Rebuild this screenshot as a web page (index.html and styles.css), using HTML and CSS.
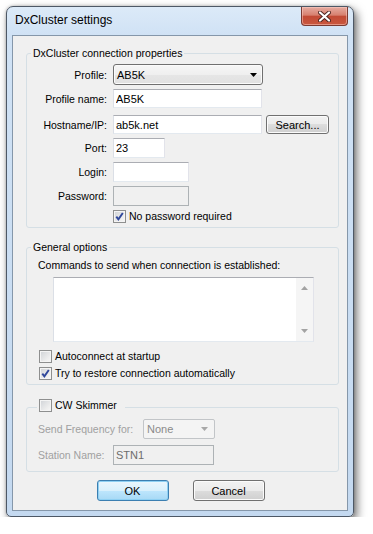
FILE: index.html
```html
<!DOCTYPE html>
<html lang="en">
<head>
  <meta charset="UTF-8" />
  <title>DxCluster settings</title>
  <link rel="stylesheet" href="styles.css">
</head>
<body>
  <div class="window">
    <div class="titlebar">
      <span class="title">DxCluster settings</span>
      <span class="close-btn">
        <svg width="13" height="11" viewBox="0 0 13 11">
          <path d="M2 1.5 L11 9.5 M11 1.5 L2 9.5" stroke="#4b2420" stroke-width="4" stroke-linecap="round"/>
          <path d="M2 1.5 L11 9.5 M11 1.5 L2 9.5" stroke="#fff" stroke-width="2.2" stroke-linecap="round"/>
        </svg>
      </span>
    </div>

    <div class="client">
      <fieldset class="group">
        <legend>DxCluster connection properties</legend>
        <div class="props">
          <div class="row">
            <span class="lbl">Profile:</span>
            <div class="combo combo-profile">
              <span>AB5K</span>
              <svg width="7" height="4" viewBox="0 0 7 4"><path d="M0 0 H7 L3.5 4 Z" fill="#000"/></svg>
            </div>
          </div>
          <div class="row">
            <span class="lbl">Profile name:</span>
            <input class="text w-wide h19" value="AB5K">
          </div>
          <div class="row row-host">
            <span class="lbl">Hostname/IP:</span>
            <input class="text w-wide h19" value="ab5k.net">
            <button class="btn btn-search">Search...</button>
          </div>
          <div class="row">
            <span class="lbl">Port:</span>
            <input class="text w-port" value="23">
          </div>
          <div class="row">
            <span class="lbl">Login:</span>
            <input class="text w-login" value="">
          </div>
          <div class="row">
            <span class="lbl">Password:</span>
            <input class="text w-login" disabled>
          </div>
          <div class="row">
            <span class="lbl"></span>
            <span class="opt">
              <span class="check">
                <svg width="11" height="11" viewBox="0 0 11 11"><path d="M2.3 5.6 L4.4 8.4 L8.8 2" fill="none" stroke="#2f479b" stroke-width="1.9"/></svg>
              </span>
              No password required
            </span>
          </div>
        </div>
      </fieldset>

      <fieldset class="group group-general">
        <legend>General options</legend>
        <div class="general">
          <div class="cmd-label">Commands to send when connection is established:</div>
          <div class="memo">
            <div class="scroll">
              <svg width="7" height="4" viewBox="0 0 7 4"><path d="M0 4 H7 L3.5 0 Z" fill="#a3a3a3"/></svg>
              <svg width="7" height="4" viewBox="0 0 7 4"><path d="M0 0 H7 L3.5 4 Z" fill="#a3a3a3"/></svg>
            </div>
          </div>
          <div class="opt opt-row">
            <span class="check"></span>
            Autoconnect at startup
          </div>
          <div class="opt opt-row opt-next">
            <span class="check">
              <svg width="11" height="11" viewBox="0 0 11 11"><path d="M2.3 5.6 L4.4 8.4 L8.8 2" fill="none" stroke="#2f479b" stroke-width="1.9"/></svg>
            </span>
            Try to restore connection automatically
          </div>
        </div>
      </fieldset>

      <fieldset class="group group-skimmer">
        <legend>
          <span class="opt">
            <span class="check"></span>
            CW Skimmer
          </span>
        </legend>
        <div class="skimmer">
          <div class="srow">
            <span class="dim-lbl lbl-freq">Send Frequency for:</span>
            <div class="combo combo-off">
              <span>None</span>
              <svg width="7" height="4" viewBox="0 0 7 4"><path d="M0 0 H7 L3.5 4 Z" fill="#a8a8a8"/></svg>
            </div>
          </div>
          <div class="srow srow-next">
            <span class="dim-lbl lbl-station">Station Name:</span>
            <input class="text w-station" value="STN1" disabled>
          </div>
        </div>
      </fieldset>

      <div class="actions">
        <button class="btn btn-default">OK</button>
        <button class="btn">Cancel</button>
      </div>
    </div>
  </div>
</body>
</html>
```

FILE: styles.css
```css
* {
  box-sizing: border-box;
}
body {
  margin: 0;
  background: #fff;
  font-family: "Liberation Sans", Arial, sans-serif;
  font-size: 10.5px;
  color: #000;
}
.window {
  margin: 6px 0 0 6px;
  width: 348px;
  border: 1px solid #4d5866;
  border-radius: 7px 7px 5px 5px;
  padding: 0 5px 5px;
  background: linear-gradient(to bottom, #dceaf8 0, #d0e2f5 28px, #c4d9f0 100%);
  box-shadow: 3px 4px 10px rgba(0, 0, 0, 0.55), 0 0 3px rgba(0, 0, 0, 0.25);
}
.titlebar {
  height: 28px;
  display: flex;
  align-items: flex-start;
}
.title {
  margin: 5px 0 0 3px;
  font-size: 12px;
  line-height: 16px;
  color: #000;
}
.close-btn {
  margin-left: auto;
  width: 47px;
  height: 19px;
  display: flex;
  align-items: center;
  justify-content: center;
  border: 1px solid #7a3a32;
  border-top: none;
  border-radius: 0 0 4px 4px;
  background: linear-gradient(to bottom, #e6aca1 0%, #d7806f 45%, #c24a35 52%, #c9583f 100%);
  box-shadow: inset 0 0 0 1px rgba(255, 210, 200, 0.5);
}
.client {
  background: #f0f0f0;
  border: 1px solid #8597aa;
  padding: 11px 8px 9px 13px;
}
.group {
  margin: 0;
  padding: 0;
  min-width: 0;
  border: 1px solid #d5dfe5;
  border-radius: 3px;
}
.group legend {
  margin-left: 4px;
  padding: 0 2px;
  line-height: 13px;
}
.group-general {
  margin-top: 13px;
}
.group-skimmer {
  margin-top: 14px;
}
.group-skimmer legend {
  margin-left: 10px;
  padding: 0 8px 0 2px;
}

/* connection properties */
.props {
  display: flex;
  flex-direction: column;
  gap: 4px;
  padding: 4px 0 4px;
}
.row {
  display: flex;
  align-items: center;
}
.row-host {
  margin-top: 3px;
}
.lbl {
  width: 80px;
  margin-right: 6px;
  text-align: right;
}
.text {
  height: 20px;
  margin: 0;
  padding: 0 2px;
  font: inherit;
  font-size: 11px;
  color: #000;
  background: #fff;
  border: 1px solid;
  border-color: #abadb3 #e2e3ea #e3e9ef #dbdfe6;
  outline: none;
}
.text:disabled {
  background: #f0f0f0;
  border-color: #adb2b5;
  color: #6d6d6d;
}
.h19 {
  height: 19px;
}
.w-wide {
  width: 149px;
}
.w-port {
  width: 52px;
}
.w-login {
  width: 76px;
}
.w-station {
  width: 101px;
}
.combo {
  display: flex;
  align-items: center;
  justify-content: space-between;
  padding: 0 5px 0 3px;
  font-size: 11px;
}
.combo-profile {
  width: 150px;
  height: 21px;
  border: 1px solid #707070;
  border-radius: 3px;
  background: linear-gradient(to bottom, #f6f6f6 0%, #efefef 50%, #e6e6e6 50%, #e1e1e1 100%);
  box-shadow: inset 0 0 0 1px #fbfbfb;
}
.combo-off {
  width: 72px;
  height: 20px;
  border: 1px solid #c2c5c8;
  border-radius: 2px;
  background: #f4f4f4;
  color: #8a8a8a;
  padding-right: 6px;
}

/* buttons */
.btn {
  height: 21px;
  width: 72px;
  margin: 0;
  padding: 0;
  font: inherit;
  font-size: 11px;
  color: #000;
  border: 1px solid #707070;
  border-radius: 3px;
  background: linear-gradient(to bottom, #f2f2f2 0%, #ebebeb 50%, #dddddd 50%, #cfcfcf 100%);
  box-shadow: inset 0 0 0 1px #fbfbfb;
}
.btn-search {
  width: 63px;
  height: 19px;
  margin-left: 4px;
}
.btn-default {
  border-color: #3c7fb1;
  background: linear-gradient(to bottom, #eaf6fd 0%, #d9f0fc 50%, #bee6fd 50%, #a7d9f5 100%);
  box-shadow: inset 0 0 0 1px #8fd0f3;
}
.actions {
  display: flex;
  justify-content: center;
  gap: 24px;
  margin-top: 8px;
  padding-right: 4px;
}

/* checkboxes */
.opt {
  display: inline-flex;
  align-items: center;
  gap: 3px;
  line-height: 13px;
}
.opt-row {
  display: flex;
  margin-left: 1px;
  height: 13px;
}
.check {
  width: 13px;
  height: 13px;
  flex: none;
  display: flex;
  align-items: center;
  justify-content: center;
  border: 1px solid #8e8f8f;
  background: linear-gradient(135deg, #cfd2d6 0%, #eeeeee 70%, #f7f7f7 100%);
  box-shadow: inset 0 0 0 1px #f4f4f4;
}

/* general options */
.general {
  padding: 5px 0 4px 11px;
}
.cmd-label {
  line-height: 13px;
}
.memo {
  margin: 5px 0 0 15px;
  width: 261px;
  height: 65px;
  display: flex;
  justify-content: flex-end;
  background: #fff;
  border: 1px solid;
  border-color: #abadb3 #e2e3ea #e3e9ef #dbdfe6;
}
.scroll {
  width: 17px;
  display: flex;
  flex-direction: column;
  align-items: center;
  justify-content: space-between;
  padding: 8px 0 8px;
  background: #f5f5f5;
}
.memo + .opt-row {
  margin-top: 8px;
}
.opt-next {
  margin-top: 4px;
}

/* skimmer */
.skimmer {
  padding: 4px 0 6px 11px;
}
.srow {
  display: flex;
  align-items: center;
}
.srow-next {
  margin-top: 6px;
}
.dim-lbl {
  color: #a0a0a0;
}
.lbl-freq {
  width: 105px;
}
.lbl-station {
  width: 75px;
}
```
